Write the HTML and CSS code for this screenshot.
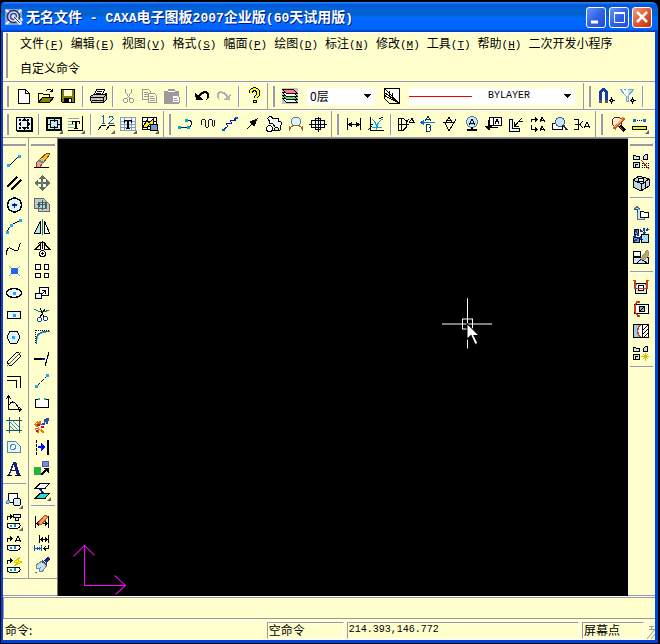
FILE: index.html
```html
<!DOCTYPE html>
<html lang="zh-CN">
<head>
<meta charset="utf-8">
<meta name="viewport" content="width=device-width, initial-scale=1">
<title>无名文件 - CAXA电子图板2007企业版</title>
<link rel="stylesheet" href="styles.css">
</head>
<body>
<div class="window">
<header class="titlebar">
  <svg class="logo" viewBox="0 0 18 18"><path d="M0 1h17v16H0z" fill="#8c9cce" stroke="none"/><path d="M1 2l4 3M16 2l-3 3M1 16l4-3M16 10l1 3" stroke="#fff" stroke-width="2"/><circle cx="8.500" cy="8.500" r="6" fill="#dfe6f8" stroke="#183070" stroke-width="1.500"/><circle cx="8.500" cy="8.500" r="3" stroke="#304890" stroke-width="1.500"/><path d="M10 10l6 6" stroke="#fff" stroke-width="3"/><path d="M9 9l6 6" stroke="#183070"/></svg>
  <h1>无名文件<span> - CAXA</span>电子图板<span>2007</span>企业版<span>(60</span>天试用版<span>)</span></h1>
  <button class="caption" aria-label="最小化"><svg viewBox="0 0 18 18"><path d="M4 14h7" stroke="#fff" stroke-width="3"/></svg></button>
  <button class="caption" aria-label="最大化"><svg viewBox="0 0 18 18"><path d="M4.500 4.500h10v10h-10z" stroke="#fff"/><path d="M4 5h11" stroke="#fff" stroke-width="2"/></svg></button>
  <button class="caption close" aria-label="关闭"><svg viewBox="0 0 18 18"><path d="M4 4l10 10M14 4L4 14" stroke="#fff" stroke-width="2.500"/></svg></button>
</header>
<main class="client">
<nav class="menubar">
  <span class="grip"></span>
  <div class="menus">
    <button>文件<span>(<u>F</u>)</span></button>
    <button>编辑<span>(<u>E</u>)</span></button>
    <button>视图<span>(<u>V</u>)</span></button>
    <button>格式<span>(<u>S</u>)</span></button>
    <button>幅面<span>(<u>P</u>)</span></button>
    <button>绘图<span>(<u>D</u>)</span></button>
    <button>标注<span>(<u>N</u>)</span></button>
    <button>修改<span>(<u>M</u>)</span></button>
    <button>工具<span>(<u>T</u>)</span></button>
    <button>帮助<span>(<u>H</u>)</span></button>
    <button>二次开发小程序</button>
    <button>自定义命令</button>
  </div>
</nav>

<div class="toolbar">
  <div class="band">
    <span class="grip"></span>
    <button aria-label="新建"><svg viewBox="0 0 18 18"><path d="M3.500 2.500h7l4 4v10h-11z" fill="#fff"/><path d="M10.500 2.500v4h4"/></svg></button>
    <button aria-label="打开"><svg viewBox="0 0 18 18"><path d="M1.500 15.500v-9h4l1 1h6v3" fill="#ffff9c"/><path d="M1.500 15.500l4-5h11l-4 5z" fill="#848200"/><path d="M9 4c2-3 4-2 6 0M15.500 1.500v3h-3"/></svg></button>
    <button aria-label="保存"><svg viewBox="0 0 18 18"><path d="M2.500 2.500h13v13h-12l-1-1z" fill="#848200"/><path d="M5 3h8v6H5z" fill="#ffffce" stroke="none"/><path d="M5 11h8v5H5z" fill="#000" stroke="none"/><path d="M10 12h2v3h-2z" fill="#fff" stroke="none"/></svg></button>
    <span class="sep"></span>
    <button aria-label="打印"><svg viewBox="0 0 18 18"><path d="M5.500 7.500l2-5h8l-2 5" fill="#fff"/><path d="M8 4.500h5M7 6.500h5"/><path d="M1.500 9.500l3-2h11l2-1v6l-3 3H3l-1.500-2z" fill="#c6c3c6"/><path d="M2 10.500h12v4M14 11l3-3M3 13.500h11M5 15.500h9"/><path d="M8 12.500h3" stroke="#ff0"/></svg></button>
    <span class="sep"></span>
    <button aria-label="剪切"><svg class="off" viewBox="0 0 18 18"><path d="M6.500 2v3l4 6M12.500 2v3l-4 6M8 11l-2 1M10 11l2 1"/><circle cx="6.500" cy="13.500" r="2"/><circle cx="12.500" cy="13.500" r="2"/></svg></button>
    <button aria-label="复制"><svg class="off" viewBox="0 0 18 18"><path d="M1.500 2.500h6l2 2v8h-8z"/><path d="M7.500 6.500h6l2 2v7h-8z" fill="#ffffce"/><path d="M3 5.500h4M3 7.500h4M3 9.500h4M9 9.500h4M9 11.500h5M9 13.500h5"/></svg></button>
    <button aria-label="粘贴"><svg class="off" viewBox="0 0 18 18"><path d="M1 4h4l1-2h5l1 2h3v12H1z" fill="#9c9a9c"/><path d="M5 4.500h7" stroke="#fff"/><path d="M9.500 8.500h5l2 2v5h-7z" fill="#fff"/><path d="M11 11.500h3M11 13.500h4"/></svg></button>
    <span class="sep"></span>
    <button aria-label="撤消"><svg viewBox="0 0 18 18"><path d="M2 6l1 7h7L7 10c2-4 6-5 7-2 1 2 0 4-2 7 5-4 5-8 3-10-3-2-7-1-10 4z" fill="#000" stroke="none"/></svg></button>
    <button aria-label="恢复"><svg class="off" viewBox="0 0 18 18"><path d="M16 6l-1 7H8l3-3C9 6 5 5 4 8c-1 2 0 4 2 7C1 11 1 7 3 5c3-2 7-1 10 4z" fill="#b5b2b5" stroke="none"/></svg></button>
    <span class="sep"></span>
    <button aria-label="帮助"><svg viewBox="0 0 18 18"><path d="M5.500 6c0-5 8-5 8 0 0 3-3 3-3 5" stroke-width="4"/><path d="M5.500 6c0-5 8-5 8 0 0 3-3 3-3 5" stroke="#ff0" stroke-width="2"/><circle cx="10" cy="14.500" r="1.500" fill="#ff0"/></svg></button>
  </div>
  <div class="band layers">
    <span class="grip"></span>
    <button aria-label="层控制"><svg viewBox="0 0 18 18"><path d="M1 1h16v16H1z" fill="#c6c3c6" stroke="none"/><path d="M1.500 11.500h11l4 4h-11z" fill="#fff"/><path d="M1.500 8.500h11l4 4h-11z" fill="#42ef52"/><path d="M1.500 5.500h11l4 4h-11z" fill="#fff"/><path d="M1.500 2.500h11l4 4h-11z" fill="#ff8080"/></svg></button>
    <span class="combo layer"><select aria-label="当前层"><option>0层</option></select><svg class="arrow" viewBox="0 0 8 4"><path d="M0 0h8L4 4z"/></svg></span>
    <button aria-label="线型设置"><svg viewBox="0 0 18 18"><path d="M1.500 1.500h15v15z" fill="#fff"/><path d="M1.500 1.500v4l15 11M1.500 5.500v3l15 8M1.500 8.500v3l5 5h10M6 4v5M9 6v6"/></svg></button>
    <span class="combo bylayer"><i class="line"></i><select class="mono" aria-label="线型"><option>BYLAYER</option></select><svg class="arrow" viewBox="0 0 8 4"><path d="M0 0h8L4 4z"/></svg></span>
  </div>
  <div class="band last snaps">
    <span class="grip"></span>
    <button aria-label="捕捉"><svg viewBox="0 0 18 18"><path d="M3.500 15V5q3-5 6 0v10" stroke="#1038b0" stroke-width="3"/><path d="M2 14h3M8 14h3" stroke="#555" stroke-width="3"/><path d="M12 13.500h6M14.500 10v7" /><circle cx="14.500" cy="13.500" r="1" fill="#fff"/></svg></button>
    <button aria-label="过滤"><svg viewBox="0 0 18 18"><path d="M1 2h14L9 9v5H7V9z" fill="#bde3ff" stroke="#6ba4de"/><path d="M8 2v7M4 2l4 7" stroke="#fff" stroke-width="2"/><path d="M11 13.500h6M13.500 10v7"/><circle cx="13.500" cy="13.500" r="1" fill="#fff"/></svg></button>
    <span class="sep"></span>
  </div>
</div>

<div class="toolbar">
  <div class="band">
    <span class="grip"></span>
    <button aria-label="显示全部"><svg viewBox="0 0 18 18"><path d="M1.500 2.500h15v13h-15z" fill="#e7f0ff"/><path d="M2 16.500h15M17.500 3v14"/><path d="M9 3l3 3H6zM9 15l3-3H6zM3 9l3-3v6zM15 9l-3-3v6z" fill="#000" stroke="none"/><path d="M4 4h2v2H4zM12 4h2v2h-2zM4 12h2v2H4zM12 12h2v2h-2z" fill="#000" stroke="none"/></svg></button>
    <span class="sep"></span>
    <button aria-label="图幅" class="more"><svg viewBox="0 0 18 18"><path d="M2 3h14v12H2z" fill="#c6e7ef" stroke-width="2"/><path d="M5.500 5.500h7v7h-7zM9 3v4M9 11v4M2 9h4M12 9h4"/></svg></button>
    <button aria-label="标题栏" class="more"><svg viewBox="0 0 18 18"><path d="M1 3.500h11M1 6.500h5M1 9.500h6M1 12.500h6" stroke="#84a6ad"/><path d="M15.500 1v14H1"/><path d="M5 6.500h8M5.500 6v3M12.500 6v3M7 13.500h4"/><path d="M9 6v8" stroke-width="2"/></svg></button>
    <span class="sep"></span>
    <button aria-label="零件序号" class="more"><svg viewBox="0 0 18 18"><path d="M5 2l1-1v7M4.500 8h3M12 3c0-3 5-2 4 1l-4 4h5" stroke="#1860b0"/><path d="M1 15l4-5h4M9 15l4-5h5"/></svg></button>
    <button aria-label="明细表" class="more"><svg viewBox="0 0 18 18"><path d="M1.500 2.500h15v13h-15zM1 6.500h15M1 9.500h15M1 12.500h15M5.500 2v14M12.500 2v14" fill="#eff7ff" stroke="#849eb5"/><path d="M5 5.500h8M5.500 5v3M12.500 5v3M7 13.500h4"/><path d="M9 5v8" stroke-width="2"/></svg></button>
    <button aria-label="图框" class="more"><svg viewBox="0 0 18 18"><path d="M1.500 2.500h14v12h-14zM2 6.500h14M2 11.500h14M6.500 3v11M12.500 3v11" fill="#fff"/><path d="M2 12l4-7 2 3 5-5-1 6-4 1-3 3z" fill="#f7ef00"/><path d="M9.500 9.500h7v6h-7z" fill="#739cc6"/></svg></button>
  </div>
  <div class="band">
    <span class="grip"></span>
    <button aria-label="轮廓线"><svg viewBox="0 0 18 18"><path d="M2 12.500h10q5-4 1-7H8" stroke="#101c42"/><path d="M1 11h3v3H1zM10 11h3v3h-3zM8 4h3v3H8z" fill="#00a6d6" stroke="none"/></svg></button>
    <button aria-label="波浪线"><svg viewBox="0 0 18 18"><path d="M2.500 10V6q2-4 4 0v5q1 4 3 0V6q2-4 4 0v4q2 3 2-1V5" stroke="#181830"/></svg></button>
    <button aria-label="双折线"><svg viewBox="0 0 18 18"><path d="M2 15l5-4-2-2 6-1-2-2 6-1-2-1 3-2" stroke="#0018ad"/><path d="M1 15h3M14 3h3" stroke="#0060d0" stroke-width="2"/></svg></button>
    <button aria-label="箭头"><svg viewBox="0 0 18 18"><path d="M4 14l7-7"/><path d="M14 4L7 7l4 4z" fill="#000"/></svg></button>
    <button aria-label="齿轮"><svg viewBox="0 0 18 18"><path d="M5 6q-4-2-1-4 3-1 4 2l4-1q2 0 1 3l3 1q2 2-1 4l1 3-2 2-4-4-2-3-4-1z" fill="#eff7ff"/><circle cx="4.500" cy="13.500" r="3" fill="#fff"/><path d="M9 15q3-6 5 0z" fill="#d6ebf7"/></svg></button>
    <button aria-label="圆弧过渡"><svg viewBox="0 0 18 18"><circle cx="9" cy="6.500" r="4.500" fill="#dff3ff" stroke="#527d9c"/><path d="M2.500 16c0-8 13-8 13 0M2.500 11v5M15.500 11v5" stroke="#946030"/></svg></button>
    <button aria-label="孔轴"><svg viewBox="0 0 18 18"><path d="M2.500 5.500h13v7h-13zM6.500 3.500h5v11h-5z" fill="#e7f7ff"/><path d="M0 9.500h18M9.500 2v15"/></svg></button>
  </div>
  <div class="band">
    <span class="grip"></span>
    <button aria-label="基本标注"><svg viewBox="0 0 18 18"><path d="M2.500 3v12M15.500 3v12M3 9.500h12"/><path d="M3 9.500l4-3v6zM15 9.500l-4-3v6z" fill="#000" stroke="none"/></svg></button>
    <button aria-label="坐标标注"><svg viewBox="0 0 18 18"><path d="M3.500 2v13h13M3 9.500h3M1 15l4-4M12 4l4-2"/><path d="M5 4q5 4 5 11M10 12q0-5 6-8M5 12.500h10" stroke="#08a4ef"/></svg></button>
    <span class="sep"></span>
    <button aria-label="倒角标注"><svg viewBox="0 0 18 18"><path d="M1.500 3v12h5l3-3V6L6 3.500H1M1 9.500h11M12 4l-3 4M12 7.500h5l-2-4-3 4"/><path d="M4.500 4v11"/></svg></button>
    <button aria-label="基准代号"><svg viewBox="0 0 18 18"><path d="M6 6l3-5 3 5M7 4.500h4M7.500 9.500h3q3 2 0 3 3 3 0 4h-3z" stroke="#103070"/><path d="M2 7.500h14" stroke="#0078ff"/><path d="M1 7.500l4-3v6z" fill="#0068e8" stroke="none"/></svg></button>
    <button aria-label="粗糙度"><svg viewBox="0 0 18 18"><path d="M2 7.500h10M4 8l4 8 7-12M5 7l3-5 3 5M6 5.500h4"/></svg></button>
    <button aria-label="形位公差"><svg viewBox="0 0 18 18"><circle cx="9" cy="7" r="5.500" fill="#bde7f7" stroke="#528296"/><path d="M6 10l3-6 3 6M7 8.500h4"/><path d="M9 12v3M4 15h10" stroke-width="2"/></svg></button>
    <button aria-label="引出说明"><svg viewBox="0 0 18 18"><path d="M4.500 2.500h12v8h-12zM8.500 3v7" fill="#fff"/><path d="M10 9l2-5 2 5M3.500 5v7M3 12.500h10"/><path d="M0 11h7l-3 5z" fill="#000" stroke="none"/></svg></button>
    <button aria-label="剖切符号"><svg viewBox="0 0 18 18"><path d="M2.500 4v12.500H12v-3H5.500V4z" fill="#e7f3ff"/><path d="M7 12l5-6 3-3M12 6.500h4M7.500 11V7M7 11.500h5"/></svg></button>
    <button aria-label="向视图"><svg viewBox="0 0 18 18"><path d="M2.500 7V4.500h5M6 2.500l2 2-2 2M2.500 10v4.500h5M6 12.500l2 2-2 2M11 7l2-5 3 5M11 5.500h4M11 16l2-5 3 5M11 14.500h4"/></svg></button>
    <button aria-label="局部放大"><svg viewBox="0 0 18 18"><path d="M1.500 8.500h10v6h-10z" fill="#fff"/><circle cx="9" cy="7" r="4.500" fill="#bde7ff" stroke="#425d7b"/><path d="M12 10l4 5" stroke="#292e52" stroke-width="2"/></svg></button>
    <button aria-label="中心孔标注"><svg viewBox="0 0 18 18"><path d="M1 4.500h4v10H1M2 9.500h5M10 6l-3 3.500 3 3.500M11 13l3-6 3 6M12 11.500h4"/></svg></button>
  </div>
  <div class="band last">
    <span class="grip"></span>
    <button aria-label="动态缩放"><svg viewBox="0 0 18 18"><circle cx="8" cy="7" r="5" fill="#ffecd0" stroke="#602010"/><path d="M11 11l5 5" stroke-width="3"/><path d="M5 14l10-11" stroke="#c06020" stroke-width="3"/><path d="M6 12l9-10" stroke="#ffb060"/><path d="M11 12l3 3" stroke="#ff3030"/></svg></button>
    <button aria-label="两点距离" class="more"><svg viewBox="0 0 18 18"><path d="M4 5.500h10" stroke-dasharray="1 1"/><path d="M2 4h3v3H2zM12 4h3v3h-3z" fill="#0878bd" stroke="none"/><path d="M1.500 11.500h14v3h-14z" fill="#f7ef00"/></svg></button>
  </div>
</div>

<div class="workspace">
  <aside class="dock left">
    <div class="column">
      <span class="grip"></span>
      <button aria-label="直线"><svg viewBox="0 0 18 18"><path d="M4 14L14 4"/><path d="M2 12h3v3H2zM13 3h3v3h-3z" fill="#20aaf0" stroke="none"/></svg></button>
      <button aria-label="平行线"><svg viewBox="0 0 18 18"><path d="M2 13L12 3M6 16L16 6" stroke-width="2"/></svg></button>
      <button aria-label="圆"><svg viewBox="0 0 18 18"><circle cx="9.500" cy="9" r="7" fill="#e0f4ff" stroke-width="1.500"/><path d="M7 9h5M9.500 6.500v5" stroke="#028" stroke-width="1.500"/></svg></button>
      <button aria-label="圆弧"><svg viewBox="0 0 18 18"><path d="M2 15Q4 5 16 3"/><path d="M1 13h3v3H1zM5 6h3v3H5zM14 1h3v3h-3z" fill="#20aaf0" stroke="none"/></svg></button>
      <button aria-label="样条"><svg viewBox="0 0 18 18"><path d="M2 15Q1 7 5 8c4 3 9 4 9-1q0-3 2-4"/></svg></button>
      <button aria-label="点"><svg viewBox="0 0 18 18"><path d="M4 4l11 10M15 4L4 14" stroke="#61a0e0"/><path d="M6 6h7v6H6z" fill="#2068e8" stroke="none"/></svg></button>
      <button aria-label="椭圆"><svg viewBox="0 0 18 18"><ellipse cx="9" cy="9" rx="7.500" ry="4.500" fill="#eef7ff" stroke-width="1.500"/><path d="M8 8h3v3H8z" fill="#20aaf0" stroke="none"/></svg></button>
      <button aria-label="矩形"><svg viewBox="0 0 18 18"><path d="M2.500 5.500h13v7h-13z" fill="#e9f6ff"/><path d="M8 8h3v3H8z" fill="#20aaf0" stroke="none"/></svg></button>
      <button aria-label="正多边形"><svg viewBox="0 0 18 18"><path d="M5 3h7l3 6-3 6H5L2 9z" fill="#dff3ff"/><path d="M7 8h3v3H7z" fill="#20aaf0" stroke="none"/></svg></button>
      <button aria-label="中心线"><svg viewBox="0 0 18 18"><path d="M3 11l8-8q5-1 4 4l-8 8q-5 1-4-4z"/><path d="M2 16L16 2" stroke="#555"/></svg></button>
      <button aria-label="等距线"><svg viewBox="0 0 18 18"><path d="M2 4.500h13.500V16M2 8.500h9.500V16"/></svg></button>
      <button aria-label="公式曲线"><svg viewBox="0 0 18 18"><path d="M3.500 3v12.500H16M1 5l2.500-3L6 5M14 13l2 2.500-2 2M4 11q4-7 9 2l1 2"/></svg></button>
      <button aria-label="剖面线"><svg viewBox="0 0 18 18"><path d="M4.500 1v16M14.500 1v16M1 4.500h16M1 14.500h16" stroke="#205070"/><path d="M4 5l9 9M4 9l5 5M8 5l6 6" stroke="#2898c0"/></svg></button>
      <button aria-label="填充"><svg viewBox="0 0 18 18"><path d="M2.500 3.500h8l5 5v6h-13z" fill="#e3f6ff" stroke="#528aa5"/><circle cx="8" cy="9" r="2.500" fill="#fff" stroke="#528aa5"/></svg></button>
      <button aria-label="文字"><svg viewBox="0 0 18 18"><path d="M9 2L4 15M6 10.500h6" stroke="#102080" stroke-width="1.500"/><path d="M9.500 2l4 13" stroke="#102080" stroke-width="3"/><path d="M2 15.500h5M10 15.500h6"/></svg></button>
      <span class="sep"></span>
      <button aria-label="局部放大图" class="more"><svg viewBox="0 0 18 18"><path d="M3.500 3.500h9v9h-9z" fill="#fff"/><circle cx="12" cy="12" r="4" fill="#d7edff"/><circle cx="3" cy="12" r="1.500" fill="#abe" stroke="#38c"/></svg></button>
      <button aria-label="块生成" class="more"><svg viewBox="0 0 18 18"><path d="M2.500 8V4.500H6M5 2.500l2 2-2 2"/><path d="M8.500 2.500h7v3h-7zM10.500 5.500h3v3h-3z" fill="#d8eff7"/><rect x="2" y="11" width="13" height="5" rx="2" fill="#fff"/><path d="M5 13.500h2M10 12v3" stroke="#0898b8" stroke-width="2"/></svg></button>
      <button aria-label="块属性"><svg viewBox="0 0 18 18"><path d="M2.500 8V4.500H6M5 2.500l2 2-2 2M10 8l3-6 3 6M11 6.500h4"/><rect x="2" y="11" width="13" height="5" rx="2" fill="#fff"/><path d="M5 13.500h2M10 12v3" stroke="#0898b8" stroke-width="2"/></svg></button>
      <button aria-label="块编辑"><svg viewBox="0 0 18 18"><path d="M2.500 8V4.500H6M5 2.500l2 2-2 2"/><path d="M15 1l-6 5 4 1-4 3 8-4-4-1z" fill="#ff0" stroke="#d8c800"/><rect x="2" y="11" width="13" height="5" rx="2" fill="#fff"/><path d="M5 13.500h2M10 12v3" stroke="#0898b8" stroke-width="2"/></svg></button>
    </div>
    <div class="column">
      <span class="grip"></span>
      <button aria-label="删除"><svg viewBox="0 0 18 18"><path d="M3 11l3-3 4 3-3 4H3z" fill="#f59a88" stroke="#844"/><path d="M6 8l8-7 3 1-7 9z" fill="#ffbd31" stroke="#845000"/><path d="M6 8l4 3" stroke="#39c" stroke-width="2"/><path d="M1 15.500h15"/></svg></button>
      <button aria-label="平移"><svg viewBox="0 0 18 18"><path d="M9 2v14M2 9h14" stroke="#636b6b" stroke-width="2"/><path d="M9 1l4 4H5zM9 17l4-4H5zM1 9l4-4v8zM17 9l-4-4v8z" fill="#636b6b" stroke="none"/><path d="M8 8h2v2H8z" fill="#399" stroke="none"/></svg></button>
      <button aria-label="平移复制"><svg viewBox="0 0 18 18"><path d="M1.500 2.500h9l3 3v7h-12zM5.500 6.500h9l2 2v7h-11z" fill="#bcc" stroke="#666"/><path d="M4 8.500h10M9.500 4v10M6.500 6v5M12.500 6v6" stroke="#356060"/></svg></button>
      <button aria-label="镜像"><svg viewBox="0 0 18 18"><path d="M7.500 3v12h-6z" fill="#bde3ef"/><path d="M11.500 3v12h5z" fill="#fff"/><path d="M9.500 1v16" stroke="#088"/></svg></button>
      <button aria-label="旋转"><svg viewBox="0 0 18 18"><path d="M2 9.500L7.500 4v5.500zM11.500 9.500V4L17 9.500zM5 4q4-4 8 0M9.500 1v8"/><circle cx="9.500" cy="13.500" r="3" fill="#fff"/><path d="M8 13.500h3M9.500 12v3"/></svg></button>
      <button aria-label="阵列"><svg viewBox="0 0 18 18"><path d="M2.500 2.500h5v5h-5zM11.500 2.500h4v5h-4zM2.500 11.500h5v4h-5zM11.500 11.500h4v4h-4z" fill="#fff"/></svg></button>
      <button aria-label="比例缩放"><svg viewBox="0 0 18 18"><path d="M6.500 3.500h9v8h-9z" fill="#fff"/><path d="M2.500 9.500h6v5h-6z" fill="#e8f4ff"/><path d="M9 10l3-3M9 6.500h3.500V10"/></svg></button>
      <button aria-label="裁剪"><svg viewBox="0 0 18 18"><path d="M1 3q8 5 15 1" stroke="#085"/><path d="M7 2l4 9M12 3l-5 8"/><circle cx="6.500" cy="13.500" r="2" stroke="#103aa8"/><circle cx="12.500" cy="12.500" r="2" stroke="#103aa8"/></svg></button>
      <button aria-label="过渡"><svg viewBox="0 0 18 18"><path d="M3.500 16V9q2-5 8-5.500h5" stroke="#28678c"/><path d="M2.500 2v14M3 2.500h14" stroke-dasharray="1 1"/><path d="M4 11q1-6 9-7" stroke="#2aa8e0"/></svg></button>
      <button aria-label="齐边"><svg viewBox="0 0 18 18"><path d="M1 9h11" stroke-width="2"/><path d="M9 9h3" stroke="#0018f0" stroke-width="2"/><path d="M12 16l4-14"/></svg></button>
      <button aria-label="拉伸"><svg viewBox="0 0 18 18"><path d="M4 14l9-9" stroke-dasharray="4 2"/><path d="M2 13h3v3H2zM13 2h3v3h-3z" fill="#20aaf0" stroke="none"/></svg></button>
      <button aria-label="打断"><svg viewBox="0 0 18 18"><path d="M6 5.500H2.500v8h13v-8H12" fill="#fff"/><path d="M5 4h2v2H5zM11 4h2v2h-2z" fill="#30a8b8" stroke="none"/></svg></button>
      <button aria-label="打散"><svg viewBox="0 0 18 18"><path d="M2 8l3 3M7 5v4M2 13l4-1M5 17l1-4M8 14l3 3M4 6l3 3" stroke="#e77100" stroke-width="1.500"/><path d="M9 9l6-7M11 4h6M14 2v6M10 8l6-1" stroke="#304aa0" stroke-dasharray="2 1" stroke-width="1.500"/><path d="M4 9h3M3 15h2M8 11h3" stroke="#d40040" stroke-width="2"/></svg></button>
      <button aria-label="移动到边"><svg viewBox="0 0 18 18"><path d="M3.500 2v15" stroke-dasharray="3 1"/><path d="M15 2v15" stroke-width="2"/><path d="M5 9h6" stroke="#0010ff" stroke-width="2"/><path d="M8 5l5 4-5 4z" fill="#0010ff" stroke="none"/></svg></button>
      <button aria-label="改变颜色"><svg viewBox="0 0 18 18"><path d="M1.500 7.500h6v7h-6z" fill="#20b830" stroke="#40a050"/><path d="M9.500 1.500h6v5h-6z" fill="#738ce7" stroke="#5058a0"/><path d="M8 15l6-6" stroke-width="2"/><path d="M10 8h6v6z" fill="#000" stroke="none"/></svg></button>
      <button aria-label="改变层" class="more"><svg viewBox="0 0 18 18"><path d="M7 1.500h9L12 6.500H2z" fill="#fff"/><path d="M7 11.500h9L12 16.500H2z" fill="#20ddd8"/><path d="M7 7l3 4" stroke="#0018e0" stroke-width="2"/></svg></button>
      <span class="sep"></span>
      <button aria-label="标注编辑"><svg viewBox="0 0 18 18"><path d="M2.500 4v12M15.500 4v12M2 11.500h14"/><path d="M3 11.500l3-3v6zM15 11.500l-3-3v6z" fill="#000" stroke="none"/><path d="M5 11l7-8 3 2-7 8z" fill="#ffa060" stroke="#b85830"/></svg></button>
      <button aria-label="尺寸驱动"><svg viewBox="0 0 18 18"><path d="M6.500 1v8M15.500 1v8M7 5.500h8M15.500 11v3.500H12M13 12l-2 2.500 2 2"/><path d="M7 5.500l3-3v6zM15 5.500l-3-3v6z" fill="#000" stroke="none"/><path d="M1.500 11v6M8.500 11v6M2 14.500h6M4.500 13v3M6.500 13v3" stroke="#0755b5"/></svg></button>
      <button aria-label="格式刷"><svg viewBox="0 0 18 18"><path d="M3 9l6-4 5 4-5 7-3-1 1-3-3 1z" fill="#c4dcf0" stroke="#708898"/><path d="M9 5l5 4" stroke="#445" stroke-width="2"/><path d="M12 6l4-4" stroke="#1020a0" stroke-width="3"/><path d="M2 16h2" stroke="#37a"/></svg></button>
    </div>
    <div class="dock-foot"></div>
  </aside>
  <section class="canvas" aria-label="绘图区">
    <svg viewBox="57 138 571 457" preserveAspectRatio="none">
      <path class="axis" d="M84.500 585V544.500M73.500 555.500l11-11 10 10M84 584.500h41M114.500 574.500l11 10-10 9"/>
      <path class="cross" d="M467.500 298v50M442 323.500h50M462.500 318.500h10v10h-10z"/>
      <path class="pointer" d="M467 323v16l4-4 4 9 3-1-4-8h5z"/>
    </svg>
  </section>
  <aside class="dock right">
    <div class="column">
      <span class="grip"></span>
      <button aria-label="提取图符"><svg viewBox="0 0 18 18"><path d="M1.500 3.500h2l1 1h3v3h-6zM11.500 4.500l2-2h2v5h-4zM1.500 10.500h6v5h-6z" fill="#cde4ef"/><path d="M3.500 15v-2.500H6" /><path d="M10 11.500h7M10 13.500h7M10 15.500h7" stroke-dasharray="1 1"/><path d="M9 8l8 9" stroke="#e02810"/></svg></button>
      <button aria-label="图库"><svg viewBox="0 0 18 18"><path d="M1 6l6-4 10 3v7l-8 5-8-4z" fill="#bdd7e4"/><path d="M1 6l9 4 7-5M9.500 10v7M13.500 8v6"/><ellipse cx="9" cy="6" rx="3" ry="1.500" fill="#fff"/></svg></button>
      <span class="sep"></span>
      <button aria-label="驱动图符"><svg viewBox="0 0 18 18"><path d="M5.500 6v9.500h7V11M2 5.500l3-3 3 3" fill="#cde4ef" stroke="#527284"/><path d="M8.500 7.500h3l1 1h4v5h-8z" fill="#fff"/><path d="M2 5.500h3v3" stroke="#0755a5"/></svg></button>
      <button aria-label="定义图符"><svg viewBox="0 0 18 18"><path d="M2 3h4v5H2zM1 11h6v5H1z" fill="#58a0d8"/><path d="M9.500 8.500h7v8h-7z" fill="#acdcf4"/><path d="M3 4l7 10M1 11l6-3M8 4l4 3 4-4M2 15l5-3M12 2v5" stroke="#103aa8" stroke-dasharray="3 1" stroke-width="2"/></svg></button>
      <button aria-label="编辑图符"><svg viewBox="0 0 18 18"><path d="M1.500 3.500h7v5h-7z" fill="#fff"/><path d="M1.500 9.500h15v6h-15z" fill="#cde4f4"/><path d="M5 15l4-4 6 4" /><path d="M10 9l5-7 1 1v5l-3 3-4 1z" fill="#bfa468" stroke="#979677"/></svg></button>
      <span class="sep"></span>
      <button aria-label="构件库"><svg viewBox="0 0 18 18"><path d="M3.500 5.500h11v10h-11z" fill="#d6edf7"/><circle cx="9" cy="10" r="3" fill="#fff"/><path d="M1 2.500h2v8h12v-8h2M3 3l1 4M15 3l-1 4" stroke="#c54018" stroke-width="1.500"/></svg></button>
      <button aria-label="技术要求"><svg viewBox="0 0 18 18"><path d="M2.500 4.500h14v9h-14z" fill="#fff"/><circle cx="10" cy="9" r="3" fill="#8ba"/><path d="M8 11l4-4"/><path d="M6 2q-4 2-3 7 0 6 4 7M4 2h4M5 16h3" stroke="#d03b18" stroke-width="1.500"/></svg></button>
      <button aria-label="剖面图案"><svg viewBox="0 0 18 18"><path d="M1.500 2.500h15v13h-15z" fill="#fff"/><path d="M2 3h6q-5 6 0 12H2z" fill="#9ce" stroke="none"/><path d="M8 3Q3 9 8 15" stroke="#d04018" stroke-width="1.500"/><path d="M10.500 3v13M11 8l5-5M11 12l5-5M12 15l4-4"/></svg></button>
      <button aria-label="转换图库"><svg viewBox="0 0 18 18"><path d="M1.500 3.500h2l1 1h3v3h-6zM11.500 4.500l2-2h2v5h-4zM1.500 10.500h6v5h-6z" fill="#cde4ef"/><path d="M3.500 15v-2.500H6"/><path d="M13.500 9v8M9 12.500h8M11 10l5 5M16 10l-5 5" stroke="#d8b800"/></svg></button>
      <span class="end"></span>
    </div>
    <div class="dock-foot"></div>
  </aside>
</div>
<div class="command"></div>
<footer class="status">
  <span class="prompt">命令:</span>
  <span class="field state">空命令</span>
  <output class="field mono coords">214.393,146.772</output>
  <span class="field snap">屏幕点</span>
  <svg class="sizer" viewBox="0 0 8 14"><path d="M0 14L8 4M4 14l4-5M2 1.500h5M4.500 1v4M2 4.500h6"/></svg>
</footer>
</main>
</div>
</body>
</html>
```

FILE: styles.css
```css
:root {
  --cream: #ffffce;
  --shade: #9c9a9c;
  --blue: #0042de;
}

* {
  box-sizing: border-box;
}

body {
  margin: 0;
  background: #000;
  color: #000;
  font: 12px/16px "Noto Sans CJK SC", sans-serif;
}

button {
  display: flex;
  align-items: center;
  justify-content: center;
  margin: 0;
  padding: 0;
  border: 0;
  background: none;
  color: inherit;
  font: inherit;
}

svg {
  display: block;
  flex: none;
  width: 18px;
  height: 18px;
  fill: none;
  stroke: #000;
}

.toolbar svg,
.column svg {
  shape-rendering: crispEdges;
}

.off {
  stroke: var(--shade);
}

.mono {
  font-family: "Liberation Mono", monospace;
  font-size: 10px;
}

.window {
  display: flex;
  flex-direction: column;
  min-height: 100vh;
  padding: 2px 2px 3px 1px;
}

.titlebar {
  display: flex;
  align-items: center;
  gap: 3px;
  height: 30px;
  padding: 0 6px 0 4px;
  border-radius: 4px 6px 0 0;
  background: linear-gradient(#2a8cff 0, #0052d8 3px, #0062d6 6px, #0062ce 14px, #006bff 15px, #0063ff 27px, #0039b5 30px);
}

h1 {
  flex: 1;
  margin: 0;
  overflow: hidden;
  color: #fff;
  font: bold 14px/20px "Noto Sans CJK SC", sans-serif;
  text-shadow: 1px 1px #00187b;
  white-space: pre;
}

h1 span {
  font-family: "Liberation Mono", monospace;
  font-size: 13px;
}

.caption {
  width: 20px;
  height: 21px;
  border: 1px solid #fff;
  border-radius: 3px;
  background: linear-gradient(135deg, #6b94f7, #3163e7 50%, #214ad6);
}

.caption.close {
  background: linear-gradient(135deg, #f79c84, #de5931 50%, #bd3110);
}

.client {
  display: flex;
  flex: 1;
  flex-direction: column;
  border: solid var(--blue);
  border-width: 0 3px 3px 2px;
  background: var(--cream);
}

.grip {
  flex: none;
  width: 3px;
  border-right: 2px solid var(--shade);
  border-left: 1px solid #fff;
}

.menubar {
  display: flex;
  gap: 12px;
  padding: 0 0 3px 2px;
  border-top: 1px solid #fff;
  border-bottom: 1px solid var(--shade);
}

.menus {
  display: flex;
  flex-wrap: wrap;
  gap: 5px 7px;
}

.menus button {
  align-items: baseline;
  height: 20px;
  line-height: 20px;
}

.menus span {
  font: 11px/16px "Liberation Mono", monospace;
}

.toolbar {
  display: flex;
  height: 28px;
  border-top: 1px solid #fff;
  border-bottom: 1px solid var(--shade);
}

.band {
  display: flex;
  align-items: center;
  padding: 0 2px 0 4px;
  border-left: 1px solid var(--shade);
}

.band:first-child {
  padding-left: 3px;
  border-left: 0;
}

.band.last {
  padding-right: 0;
}

.band.snaps {
  padding-right: 8px;
}

.band .grip {
  height: 21px;
  margin-right: 4px;
}

.band button,
.column button {
  position: relative;
  flex: none;
  width: 22px;
  height: 22px;
}

.more::after {
  position: absolute;
  right: 2px;
  bottom: 1px;
  border: 2px solid #636163;
  border-top-color: transparent;
  border-left-color: transparent;
  content: "";
}

.band .sep {
  width: 2px;
  height: 21px;
  margin: 0 3px;
  border-right: 1px solid #fff;
  border-left: 1px solid var(--shade);
}

.layers {
  flex: 1;
  gap: 6px;
  padding-right: 8px;
}

.layers .grip {
  margin-right: -2px;
}

.combo {
  position: relative;
  display: flex;
  align-items: center;
  height: 17px;
  background: #fff;
}

.layer {
  width: 68px;
}

.bylayer {
  flex: 1;
}

.combo select {
  flex: 1;
  min-width: 0;
  padding: 0 16px 0 3px;
  border: 0;
  background: none;
  color: #000;
  font-family: inherit;
  font-size: 12px;
  line-height: 16px;
  appearance: none;
}

.combo select.mono {
  padding-left: 16px;
  font-family: "Liberation Mono", monospace;
  font-size: 10px;
}

.line {
  width: 38%;
  height: 1px;
  background: #f00000;
}

.combo .arrow {
  position: absolute;
  right: 4px;
  width: 8px;
  height: 4px;
  fill: #000;
  stroke: none;
}

.workspace {
  display: flex;
  flex: 1;
}

.dock {
  display: flex;
  flex-wrap: wrap;
}

.dock.left {
  width: 54px;
}

.dock.right {
  flex-direction: column;
  flex-wrap: nowrap;
  width: 27px;
}

.column {
  display: flex;
  flex: 1;
  flex-direction: column;
  align-items: flex-start;
  padding: 5px 2px 2px;
}

.left .column:first-child {
  flex: 0 0 25px;
  padding-left: 0;
}

.column + .column {
  border-left: 1px solid var(--shade);
}

.column .grip {
  align-self: stretch;
  width: auto;
  height: 3px;
  margin-bottom: 4px;
  border: solid var(--shade);
  border-width: 0 1px 2px 0;
  border-top: 1px solid #fff;
}

.column .sep {
  align-self: stretch;
  height: 2px;
  margin: 3px 0;
  border-top: 1px solid var(--shade);
  border-bottom: 1px solid #fff;
}

.column .end {
  align-self: stretch;
  margin-top: 2px;
  border-top: 1px solid var(--shade);
}

.dock-foot {
  width: 100%;
  height: 18px;
  border-top: 1px solid var(--shade);
  border-bottom: 1px solid var(--shade);
}

.right .dock-foot {
  border-top: 0;
}

.canvas {
  flex: 1;
  background: #000;
  box-shadow: inset 1px 1px #737173;
}

.canvas svg {
  width: 100%;
  height: 100%;
}

.axis {
  stroke: #f0f;
}

.cross {
  stroke: #fff;
}

.pointer {
  fill: #fff;
  stroke: #000;
}

.command {
  height: 22px;
  margin-top: 1px;
  border: solid var(--shade);
  border-width: 1px 0 1px 1px;
  box-shadow: 0 -1px #fff;
}

.status {
  display: flex;
  gap: 3px;
  height: 20px;
  margin-top: 1px;
  padding: 1px 0;
  border-top: 1px solid #fff;
}

.prompt {
  width: 40%;
  padding-left: 2px;
}

.field {
  padding-left: 1px;
  border: 1px solid;
  border-color: var(--shade) #fff #fff var(--shade);
  line-height: 14px;
}

.state {
  width: 77px;
}

.coords {
  flex: 1;
}

.snap {
  width: 62px;
}

.sizer {
  align-self: end;
  width: 8px;
  height: 14px;
  stroke: var(--shade);
}
```
